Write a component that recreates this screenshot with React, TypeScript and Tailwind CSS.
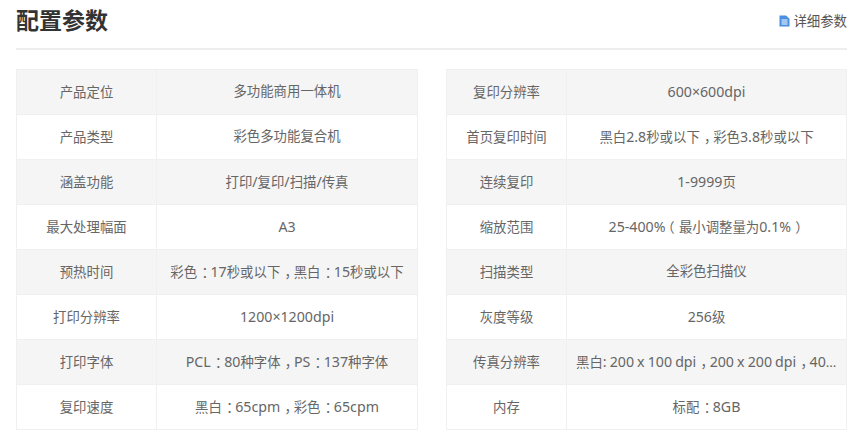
const left = [
  ["产品定位", "多功能商用一体机"],
  ["产品类型", "彩色多功能复合机"],
  ["涵盖功能", "打印/复印/扫描/传真"],
  ["最大处理幅面", "A3"],
  ["预热时间", "彩色：17秒或以下，黑白：15秒或以下"],
  ["打印分辨率", "1200×1200dpi"],
  ["打印字体", "PCL：80种字体，PS：137种字体"],
  ["复印速度", "黑白：65cpm，彩色：65cpm"],
];
const right = [
  ["复印分辨率", "600×600dpi"],
  ["首页复印时间", "黑白2.8秒或以下，彩色3.8秒或以下"],
  ["连续复印", "1-9999页"],
  ["缩放范围", "25-400%（最小调整量为0.1%）"],
  ["扫描类型", "全彩色扫描仪"],
  ["灰度等级", "256级"],
  ["传真分辨率", "黑白: 200 x 100 dpi，200 x 200 dpi，400 x 400 dpi"],
  ["内存", "标配：8GB"],
];

function Rich({ text }: { text: string }) {
  const parts = text.match(/[，：（）]|[\x20-\x7e×]+|[^\x20-\x7e×，：（）]+/g) ?? [];
  return (
    <>
      {parts.map((p, i) =>
        /[，：）]/.test(p) ? (
          <span key={i} className="pl-[0.32em] tracking-[-0.32em]">{p}</span>
        ) : p === "（" ? (
          <span key={i} className="ml-[-0.32em] mr-[0.32em]">{p}</span>
        ) : /[\x20-\x7e×]/.test(p) ? (
          <span key={i} className="text-[14.2px] [word-spacing:-0.6px]">{p}</span>
        ) : (
          <span key={i}>{p}</span>
        ),
      )}
    </>
  );
}

function Table({ rows, labelW, w }: { rows: string[][]; labelW: string; w: string }) {
  return (
    <div className={`${w} border-t border-l border-r border-[#f0f0f0]`}>
      {rows.map((r, i) => (
        <div key={i} className={`flex h-[45px] border-b border-[#f0f0f0] ${i % 2 === 0 ? "bg-[#f5f5f5]" : "bg-white"}`}>
          <div className={`${labelW} shrink-0 flex items-center justify-center border-r border-[#f0f0f0]`}>{r[0]}</div>
          <div className="flex-1 min-w-0 px-[9px] leading-[43px] text-center truncate">
            <Rich text={r[1]} />
          </div>
        </div>
      ))}
    </div>
  );
}

export default function App() {
  return (
    <div className="w-[860px] h-[436px] bg-white overflow-hidden pl-4 pr-[13px] text-[13.4px] text-[#666666] font-['Noto_Sans','Noto_Sans_CJK_SC',sans-serif]">
      <div className="h-[50px] flex justify-between border-b-2 border-[#eeeeee]">
        <h2 className="text-[23px] font-bold text-[#333333] leading-[41px]">配置参数</h2>
        <a className="flex items-center gap-[3px] h-[42px] text-[#555555]">
          <svg width="11" height="12" viewBox="0 0 11 12">
            <path d="M0.5 0.5H7L10.5 3.8V11.5H0.5Z" fill="#4a90e2" />
            <path d="M2.5 5H8.5M2.5 7H8.5M2.5 9H8.5" stroke="#ffffff" strokeWidth="1" />
          </svg>
          <span>详细参数</span>
        </a>
      </div>
      <div className="flex justify-between mt-[19px]">
        <Table rows={left} labelW="w-[140px]" w="w-[402px]" />
        <Table rows={right} labelW="w-[120px]" w="w-[401px]" />
      </div>
    </div>
  );
}
